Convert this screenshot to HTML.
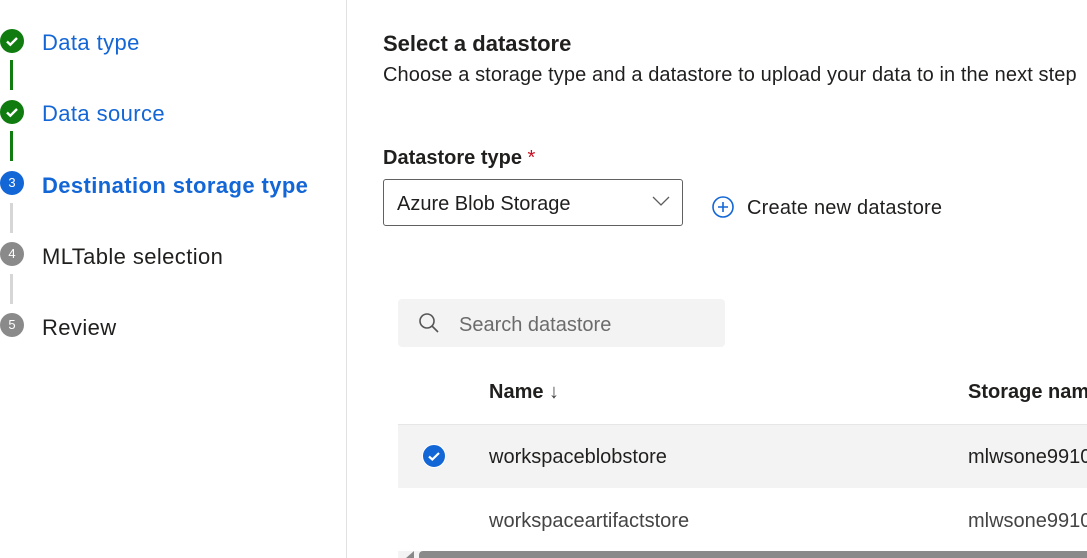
<!DOCTYPE html>
<html><head><meta charset="utf-8"><style>
*{margin:0;padding:0;box-sizing:border-box}
body{width:1087px;height:558px;overflow:hidden;background:#fff;font-family:"Segoe UI","Liberation Sans",sans-serif;color:#201f1e;position:relative}
.a{position:absolute;white-space:nowrap}
.step{font-size:22px;line-height:28px;letter-spacing:0.4px}
.dot{position:absolute;width:24px;height:24px;border-radius:50%;color:#fff;font-size:13px;text-align:center;line-height:24px}
.ln{position:absolute;left:10px;width:3px}
</style></head><body>
<div class="dot" style="left:0;top:29px;background:#107c10"><svg width="24" height="24"><path d="M7 12.5l3.3 3.2L17 9" stroke="#fff" stroke-width="2.4" fill="none"/></svg></div>
<div class="a step" style="left:42px;top:29px;color:#1366d6">Data type</div>
<div class="ln" style="top:60px;height:30px;background:#107c10"></div>
<div class="dot" style="left:0;top:100px;background:#107c10"><svg width="24" height="24"><path d="M7 12.5l3.3 3.2L17 9" stroke="#fff" stroke-width="2.4" fill="none"/></svg></div>
<div class="a step" style="left:42px;top:100px;color:#1366d6">Data source</div>
<div class="ln" style="top:131px;height:30px;background:#107c10"></div>
<div class="dot" style="left:0;top:171px;background:#1366d6">3</div>
<div class="a step" style="left:42px;top:172px;color:#1366d6;font-weight:bold">Destination storage type</div>
<div class="ln" style="top:203px;height:30px;background:#d6d6d6"></div>
<div class="dot" style="left:0;top:242px;background:#8a8a8a">4</div>
<div class="a step" style="left:42px;top:243px">MLTable selection</div>
<div class="ln" style="top:274px;height:30px;background:#d6d6d6"></div>
<div class="dot" style="left:0;top:313px;background:#8a8a8a">5</div>
<div class="a step" style="left:42px;top:314px">Review</div>
<div class="a" style="left:346px;top:0;width:1px;height:558px;background:#e1e1e1"></div>
<div class="a" style="left:383px;top:31px;font-size:22px;font-weight:bold">Select a datastore</div>
<div class="a" style="left:383px;top:64px;font-size:20px;letter-spacing:0.1px">Choose a storage type and a datastore to upload your data to in the next step</div>
<div class="a" style="left:383px;top:147px;font-size:20px;font-weight:bold">Datastore type <span style="color:#c50f1f;font-weight:normal">*</span></div>
<div class="a" style="left:383px;top:179px;width:300px;height:47px;border:1px solid #616161;border-radius:3px"></div>
<div class="a" style="left:397px;top:193px;font-size:20px">Azure Blob Storage</div>
<svg class="a" style="left:652px;top:195px" width="18" height="12"><path d="M1 2l8 8 8-8" stroke="#605e5c" stroke-width="1.3" fill="none"/></svg>
<svg class="a" style="left:711px;top:195px" width="24" height="24"><circle cx="12" cy="12" r="10" stroke="#1366d6" stroke-width="1.6" fill="none"/><path d="M12 7v10M7 12h10" stroke="#1366d6" stroke-width="1.6"/></svg>
<div class="a" style="left:747px;top:197px;font-size:20px;letter-spacing:0.2px">Create new datastore</div>
<div class="a" style="left:398px;top:299px;width:327px;height:48px;background:#f3f3f3;border-radius:4px"></div>
<svg class="a" style="left:417px;top:311px" width="24" height="24"><circle cx="10" cy="10" r="7" stroke="#555" stroke-width="1.6" fill="none"/><path d="M15 15l6 6" stroke="#555" stroke-width="1.6"/></svg>
<div class="a" style="left:459px;top:314px;font-size:20px;color:#6b6b6b">Search datastore</div>
<div class="a" style="left:489px;top:381px;font-size:20px;font-weight:bold">Name <span style="font-weight:normal;color:#444">↓</span></div>
<div class="a" style="left:968px;top:381px;font-size:20px;font-weight:bold">Storage name</div>
<div class="a" style="left:398px;top:424px;width:689px;height:1px;background:#e6e6e6"></div>
<div class="a" style="left:398px;top:425px;width:689px;height:63px;background:#f3f3f3"></div>
<div class="a" style="left:422px;top:444px;width:24px;height:24px;border-radius:50%;background:#1366d6;border:1px solid #fff"><svg width="22" height="22"><path d="M6 11.5l3.3 3L16 8" stroke="#fff" stroke-width="2.2" fill="none"/></svg></div>
<div class="a" style="left:489px;top:446px;font-size:20px">workspaceblobstore</div>
<div class="a" style="left:968px;top:446px;font-size:20px">mlwsone9910</div>
<div class="a" style="left:489px;top:510px;font-size:20px;color:#444">workspaceartifactstore</div>
<div class="a" style="left:968px;top:510px;font-size:20px;color:#444">mlwsone9910</div>
<div class="a" style="left:398px;top:551px;width:689px;height:7px;background:#f3f3f3"></div>
<div class="a" style="left:419px;top:551px;width:668px;height:7px;background:#8a8a8a;border-radius:4px 0 0 0"></div>
<div class="a" style="left:406px;top:551px;width:0;height:0;border-right:8px solid #888;border-top:7px solid transparent"></div>
</body></html>
